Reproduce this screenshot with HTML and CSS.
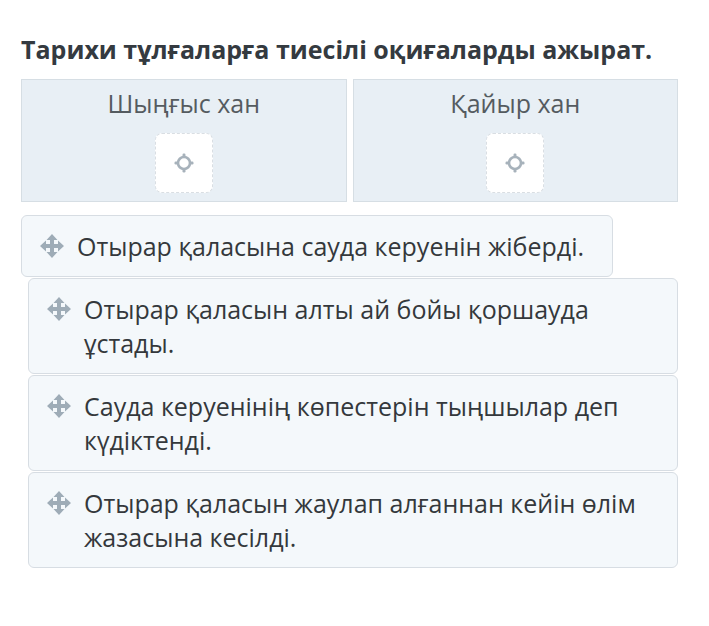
FILE: index.html
```html
<!DOCTYPE html>
<html>
<head>
<meta charset="utf-8">
<link rel="stylesheet" href="styles.css">
</head>
<body>
<div class="page">
  <h1 class="title">Тарихи тұлғаларға тиесілі оқиғаларды ажырат.</h1>
  <div class="zones">
    <div class="zone">
      <div class="zone-head">Шыңғыс хан</div>
      <div class="drop">
        <svg class="target" viewBox="0 0 22 22" width="22" height="22"><circle cx="11" cy="11" r="6" fill="none" stroke="#a7b2bb" stroke-width="2.6"/><rect x="9.5" y="1.5" width="3" height="4" rx="1.2" fill="#a7b2bb"/><rect x="9.5" y="16.5" width="3" height="4" rx="1.2" fill="#a7b2bb"/><rect x="1.5" y="9.5" width="4" height="3" rx="1.2" fill="#a7b2bb"/><rect x="16.5" y="9.5" width="4" height="3" rx="1.2" fill="#a7b2bb"/></svg>
      </div>
    </div>
    <div class="zone">
      <div class="zone-head">Қайыр хан</div>
      <div class="drop">
        <svg class="target" viewBox="0 0 22 22" width="22" height="22"><circle cx="11" cy="11" r="6" fill="none" stroke="#a7b2bb" stroke-width="2.6"/><rect x="9.5" y="1.5" width="3" height="4" rx="1.2" fill="#a7b2bb"/><rect x="9.5" y="16.5" width="3" height="4" rx="1.2" fill="#a7b2bb"/><rect x="1.5" y="9.5" width="4" height="3" rx="1.2" fill="#a7b2bb"/><rect x="16.5" y="9.5" width="4" height="3" rx="1.2" fill="#a7b2bb"/></svg>
      </div>
    </div>
  </div>
  <div class="items">
    <div class="item item-first">
      <svg class="move" viewBox="0 0 26 26" width="26" height="26"><path d="M13 1 L18.5 7 L15 7 L15 11 L19 11 L19 7.5 L25 13 L19 18.5 L19 15 L15 15 L15 19 L18.5 19 L13 25 L7.5 19 L11 19 L11 15 L7 15 L7 18.5 L1 13 L7 7.5 L7 11 L11 11 L11 7 L7.5 7 Z" fill="#9eacb7"/></svg>
      <span class="text">Отырар қаласына сауда керуенін жіберді.</span>
    </div>
    <div class="item">
      <svg class="move" viewBox="0 0 26 26" width="26" height="26"><path d="M13 1 L18.5 7 L15 7 L15 11 L19 11 L19 7.5 L25 13 L19 18.5 L19 15 L15 15 L15 19 L18.5 19 L13 25 L7.5 19 L11 19 L11 15 L7 15 L7 18.5 L1 13 L7 7.5 L7 11 L11 11 L11 7 L7.5 7 Z" fill="#9eacb7"/></svg>
      <span class="text">Отырар қаласын алты ай бойы қоршауда ұстады.</span>
    </div>
    <div class="item">
      <svg class="move" viewBox="0 0 26 26" width="26" height="26"><path d="M13 1 L18.5 7 L15 7 L15 11 L19 11 L19 7.5 L25 13 L19 18.5 L19 15 L15 15 L15 19 L18.5 19 L13 25 L7.5 19 L11 19 L11 15 L7 15 L7 18.5 L1 13 L7 7.5 L7 11 L11 11 L11 7 L7.5 7 Z" fill="#9eacb7"/></svg>
      <span class="text">Сауда керуенінің көпестерін тыңшылар деп күдіктенді.</span>
    </div>
    <div class="item">
      <svg class="move" viewBox="0 0 26 26" width="26" height="26"><path d="M13 1 L18.5 7 L15 7 L15 11 L19 11 L19 7.5 L25 13 L19 18.5 L19 15 L15 15 L15 19 L18.5 19 L13 25 L7.5 19 L11 19 L11 15 L7 15 L7 18.5 L1 13 L7 7.5 L7 11 L11 11 L11 7 L7.5 7 Z" fill="#9eacb7"/></svg>
      <span class="text">Отырар қаласын жаулап алғаннан кейін өлім жазасына кесілді.</span>
    </div>
  </div>
</div>
</body>
</html>
```

FILE: styles.css
```css
html, body {
  margin: 0;
  padding: 0;
  background: #ffffff;
}
.page {
  font-family: "Open Sans", "Noto Sans", sans-serif;
  padding: 31px 0 0 21px;
  width: 657px;
}
.title {
  margin: 0;
  font-size: 25px;
  font-weight: 700;
  line-height: 36px;
  color: #343a40;
}
.zones {
  margin-top: 12px;
  display: grid;
  grid-template-columns: 1fr 1fr;
  gap: 6px;
  width: 657px;
}
.zone {
  background: #e8eff5;
  border: 1px solid #d6dee4;
  height: 121px;
  display: flex;
  flex-direction: column;
  align-items: center;
}
.zone-head {
  margin-top: 6px;
  font-size: 25px;
  line-height: 34px;
  color: #555b60;
}
.drop {
  margin-top: 13px;
  width: 56px;
  height: 58px;
  background: #ffffff;
  border: 1px dashed #d9dee3;
  border-radius: 7px;
  display: flex;
  align-items: center;
  justify-content: center;
}
.items {
  margin-top: 13px;
  display: flex;
  flex-direction: column;
  gap: 1px;
}
.item {
  box-sizing: border-box;
  margin-left: 7px;
  width: 650px;
  min-height: 96px;
  background: #f4f8fb;
  border: 1px solid #d7dde3;
  border-radius: 6px;
  padding: 13px 20px 13px 17px;
  display: flex;
  align-items: flex-start;
  gap: 12px;
}
.item-first {
  margin-left: 0;
  width: 592px;
  min-height: 61px;
}
.move {
  flex: none;
  margin-top: 4px;
}
.text {
  font-size: 25px;
  line-height: 34px;
  color: #34383c;
}
```
